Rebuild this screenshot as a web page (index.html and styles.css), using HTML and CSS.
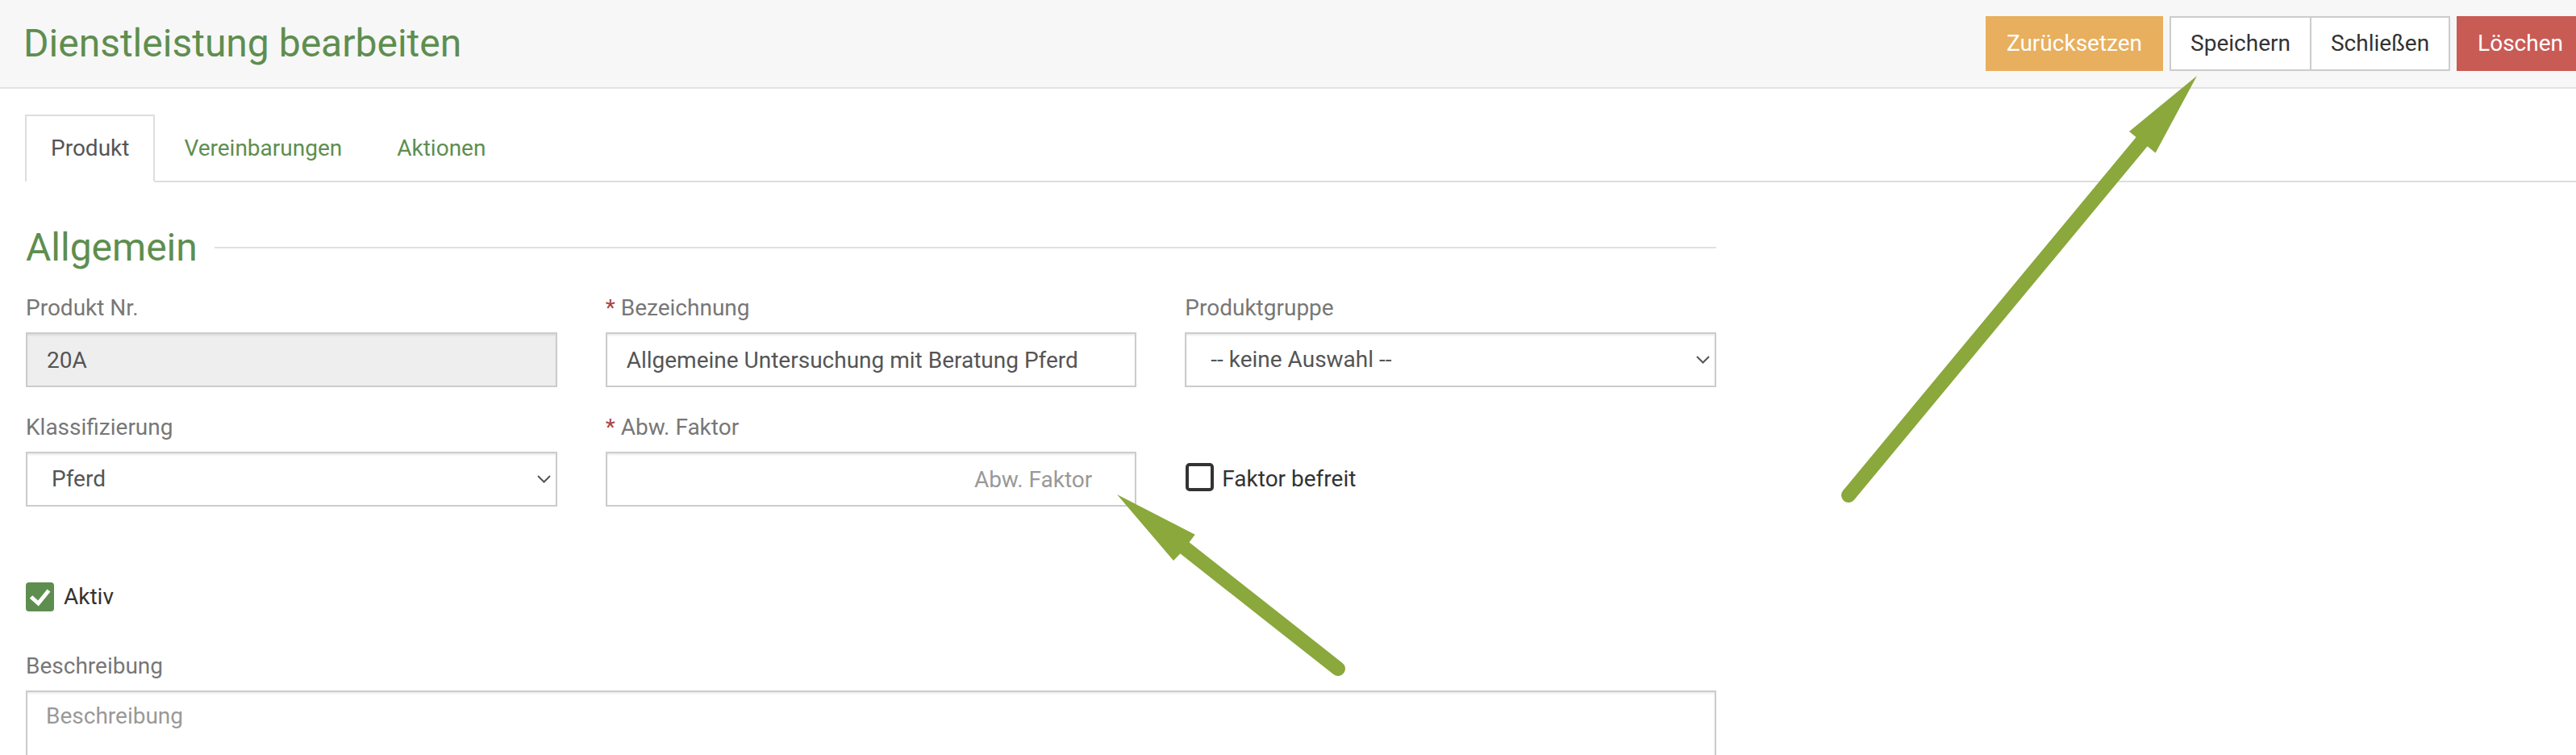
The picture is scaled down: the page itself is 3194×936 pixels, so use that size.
FILE: index.html
```html
<!DOCTYPE html>
<html lang="de">
<head>
<meta charset="utf-8">
<title>Dienstleistung bearbeiten</title>
<link rel="stylesheet" href="styles.css">
</head>
<body>
<header class="topbar">
  <h1 class="page-title">Dienstleistung bearbeiten</h1>
  <div class="actions">
    <button class="btn btn-warning">Zurücksetzen</button>
    <div class="btn-group">
      <button class="btn btn-default">Speichern</button>
      <button class="btn btn-default">Schließen</button>
    </div>
    <button class="btn btn-danger">Löschen</button>
  </div>
</header>

<main class="content">
  <nav class="tabs">
    <a class="tab active">Produkt</a>
    <a class="tab">Vereinbarungen</a>
    <a class="tab">Aktionen</a>
  </nav>

  <section class="form">
    <div class="section-title"><span>Allgemein</span><span class="rule"></span></div>

    <div class="grid">
      <div class="group">
        <label class="label">Produkt Nr.</label>
        <input class="control" type="text" value="20A" disabled>
      </div>
      <div class="group">
        <label class="label"><span class="req">*</span>Bezeichnung</label>
        <input class="control" type="text" value="Allgemeine Untersuchung mit Beratung Pferd">
      </div>
      <div class="group">
        <label class="label">Produktgruppe</label>
        <div class="control select"><span>-- keine Auswahl --</span>
          <svg class="chev" width="17" height="10" viewBox="0 0 17 10"><polyline points="1,1 8.5,8.5 16,1" fill="none" stroke="#555" stroke-width="2"/></svg>
        </div>
      </div>

      <div class="group">
        <label class="label">Klassifizierung</label>
        <div class="control select"><span>Pferd</span>
          <svg class="chev" width="17" height="10" viewBox="0 0 17 10"><polyline points="1,1 8.5,8.5 16,1" fill="none" stroke="#555" stroke-width="2"/></svg>
        </div>
      </div>
      <div class="group">
        <label class="label"><span class="req">*</span>Abw. Faktor</label>
        <input class="control align-right" type="text" placeholder="Abw. Faktor">
      </div>
      <div class="group">
        <div class="check-group">
          <span class="box box-empty"></span>
          <span>Faktor befreit</span>
        </div>
      </div>
    </div>

    <div class="check-row">
      <svg class="box-checked" width="35" height="36" viewBox="0 0 35 36">
        <rect x="0" y="0" width="35" height="36" rx="4" fill="#5e8e4f"/>
        <polyline points="6.5,18 15.5,26 28.5,10" fill="none" stroke="#fff" stroke-width="5"/>
      </svg>
      <span>Aktiv</span>
    </div>

    <div class="group desc">
      <label class="label">Beschreibung</label>
      <textarea class="control textarea" placeholder="Beschreibung"></textarea>
    </div>
  </section>
</main>

<svg class="annotations" width="3194" height="936" viewBox="0 0 3194 936">
  <g fill="#8aa83b">
    <line x1="2292" y1="614" x2="2662" y2="168" stroke="#8aa83b" stroke-width="18" stroke-linecap="round"/>
    <polygon points="2724,94 2640,163 2648.5,170 2664,182.5 2672.6,189.4"/>
    <line x1="1659" y1="829" x2="1461" y2="673" stroke="#8aa83b" stroke-width="18" stroke-linecap="round"/>
    <polygon points="1385,613 1481.7,662.7 1475,671.7 1463,686.7 1455,695"/>
  </g>
</svg>
</body>
</html>
```
FILE: styles.css
```css
* { box-sizing: border-box; }

html, body { margin: 0; padding: 0; }

body {
  position: relative;
  width: 3194px;
  height: 936px;
  overflow: hidden;
  background: #fff;
  color: #333;
  font-family: Roboto, "Liberation Sans", sans-serif;
  font-size: 28px;
  line-height: 40px;
}

/* Top bar */
.topbar {
  height: 110px;
  background: #f7f7f7;
  border-bottom: 2px solid #e3e3e3;
  display: flex;
  align-items: center;
  justify-content: space-between;
  padding-left: 29px;
}

.page-title {
  margin: 0;
  font-size: 48px;
  line-height: 56px;
  font-weight: 400;
  color: #5e8e4f;
}

.actions {
  display: flex;
  align-items: center;
  gap: 8px;
  margin-right: -10px;
}

.btn {
  font-family: inherit;
  font-size: 28px;
  line-height: 40px;
  padding: 12px 24px;
  border: 2px solid transparent;
  border-radius: 0;
  cursor: pointer;
}

.btn-warning { background: #e8af5e; border-color: #e8af5e; color: #fff; }
.btn-default { background: #fff; border-color: #ccc; color: #333; }
.btn-danger  { background: #c95b55; border-color: #c95b55; color: #fff; }

.btn-group { display: flex; }
.btn-group .btn + .btn { margin-left: -2px; }

/* Content */
.content { padding: 32px 0 0 32px; }

.tabs {
  display: flex;
  border-bottom: 2px solid #ddd;
  margin-left: -1px;
}

.tab {
  display: block;
  padding: 20px 30px;
  line-height: 40px;
  border: 2px solid transparent;
  margin-right: 4px;
  margin-bottom: -2px;
  color: #5e8e4f;
  text-decoration: none;
}

.tab.active {
  color: #555;
  background: #fff;
  border-color: #ddd #ddd transparent;
}

.form { width: 2096px; }

.section-title {
  display: flex;
  align-items: center;
  gap: 21px;
  margin: 53px 0 27px;
  font-size: 48px;
  line-height: 56px;
  color: #5e8e4f;
}

.rule {
  flex: 1;
  height: 2px;
  background: #e0e0e0;
}

.grid {
  display: grid;
  grid-template-columns: repeat(3, 1fr);
  column-gap: 60px;
}

.group { margin-bottom: 30px; }

.label {
  display: block;
  margin-bottom: 10px;
  color: #777;
}

.req {
  color: #a94442;
  margin-right: 7px;
}

.control {
  display: block;
  width: 100%;
  height: 68px;
  border: 2px solid #ccc;
  border-radius: 0;
  padding: 0 24px;
  font-family: inherit;
  font-size: 28px;
  color: #555;
  background: #fff;
  box-shadow: inset 0 2px 2px rgba(0, 0, 0, 0.075);
  outline: none;
}

.control:disabled {
  background: #eee;
  color: #555;
  -webkit-text-fill-color: #555;
  opacity: 1;
}

.control::placeholder { color: #999; opacity: 1; }

.align-right {
  text-align: right;
  padding-right: 53px;
}

.select {
  display: flex;
  align-items: center;
  padding: 0 6px 0 30px;
}

.chev { margin-left: auto; flex: none; }

.check-group {
  display: flex;
  align-items: center;
  gap: 10px;
  height: 68px;
  margin-top: 50px;
  color: #333;
}

.box-empty {
  display: block;
  width: 35px;
  height: 35px;
  border: 4px solid #333;
  border-radius: 5px;
  margin-left: 1px;
  margin-bottom: 6px;
}

.check-row {
  display: flex;
  align-items: center;
  gap: 12px;
  margin-top: 62px;
  color: #333;
}

.box-checked { display: block; flex: none; }

.desc { margin-top: 46px; }

.textarea {
  height: 160px;
  padding: 10px 23px;
  line-height: 40px;
  resize: none;
}

/* Annotation overlay */
.annotations {
  position: absolute;
  top: 0;
  left: 0;
  pointer-events: none;
}
```
